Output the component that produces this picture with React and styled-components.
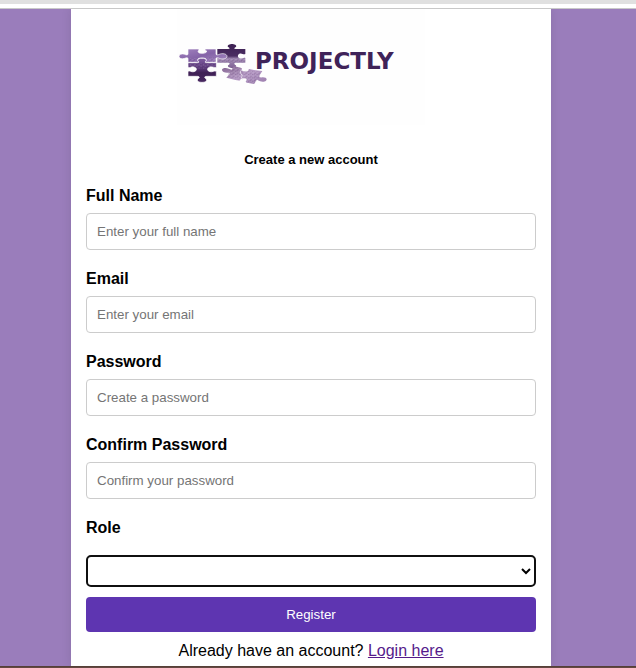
import React from "react";
import styled, { createGlobalStyle } from "styled-components";

const GlobalStyle = createGlobalStyle`
  *, *::before, *::after { box-sizing: border-box; }
  body {
    margin: 0;
    background: #9a7dbb;
    color: #000;
    font: 16px/18px "Liberation Sans", Arial, sans-serif;
  }
`;

const Page = styled.div`
  min-height: 100vh;
  display: flex;
  flex-direction: column;
`;

const TopStrip = styled.div`
  height: 9px;
  background: #fff;
  border-top: 4px solid #e0e0e0;
  border-bottom: 1px solid #c8c8c8;
`;

const Main = styled.main`
  flex: 1;
  display: flex;
  justify-content: center;
  padding-right: 14px;
  overflow: hidden;
`;

const Panel = styled.form`
  width: 100%;
  max-width: 480px;
  padding: 0 15px 6px;
  display: flex;
  flex-direction: column;
  background: #fff;
  box-shadow: 0 0 10px rgba(0, 0, 0, 0.1);
`;

const Logo = styled.svg`
  display: block;
  align-self: center;
  width: 248px;
  height: 116px;
  margin-right: 20px;
  background: #fefefe;
`;

const Wordmark = styled.text`
  font: bold 23px "DejaVu Sans", Verdana, sans-serif;
  fill: #3f2359;
`;

const Title = styled.h1`
  margin: 27px 0 19px;
  font-size: 13px;
  line-height: 16px;
  text-align: center;
`;

const Field = styled.div`
  display: flex;
  flex-direction: column;
  gap: ${({ $gap }) => $gap || 8}px;
  margin-bottom: ${({ $after }) => $after || 20}px;
`;

const Label = styled.label`
  font-weight: bold;
`;

const Input = styled.input`
  width: 100%;
  height: 37px;
  padding: 0 10px;
  border: 1px solid #ccc;
  border-radius: 4px;
  background: #fff;
  font-family: inherit;

  &::placeholder { color: #757575; }
`;

const Select = styled.select`
  width: 100%;
  height: 32px;
  border: 2px solid #101010;
  border-radius: 5px;
  background: #fff;
  color: #000;
  font-family: inherit;
`;

const Button = styled.button`
  height: 35px;
  border: 0;
  border-radius: 4px;
  background: #5e35b1;
  color: #fff;
  font-family: inherit;
  cursor: pointer;
`;

const Footer = styled.p`
  margin: 10px 0 0;
  text-align: center;
`;

const Link = styled.a`
  color: #551a8b;
`;

const BottomStrip = styled.div`
  height: 2px;
  background: #654842;
  border-top: 1px solid #554038;
`;

const fields = [
  { id: "name", label: "Full Name", type: "text", placeholder: "Enter your full name" },
  { id: "email", label: "Email", type: "email", placeholder: "Enter your email" },
  { id: "password", label: "Password", type: "password", placeholder: "Create a password" },
  { id: "confirm", label: "Confirm Password", type: "password", placeholder: "Confirm your password" },
];

function ProjectlyLogo() {
  return (
    <Logo viewBox="0 0 248 116" role="img" aria-label="Projectly">
      <defs>
        <linearGradient id="lilac" x1="0" y1="0" x2="1" y2="1">
          <stop offset="0" stopColor="#a283bf" />
          <stop offset=".5" stopColor="#8564a8" />
          <stop offset="1" stopColor="#a88bc4" />
        </linearGradient>
        <linearGradient id="plum" x1="0" y1="0" x2="0" y2="1">
          <stop offset="0" stopColor="#7f5ca0" />
          <stop offset=".4" stopColor="#5c3a7b" />
          <stop offset=".6" stopColor="#3f2055" />
          <stop offset="1" stopColor="#472760" />
        </linearGradient>
        <linearGradient id="dusk" x1="0" y1="0" x2="0" y2="1">
          <stop offset="0" stopColor="#3c2052" />
          <stop offset=".5" stopColor="#4b2d62" />
          <stop offset=".62" stopColor="#a48cb6" />
          <stop offset="1" stopColor="#7d6092" />
        </linearGradient>
        <linearGradient id="mist" x1="0" y1="0" x2="1" y2="1">
          <stop offset="0" stopColor="#82638f" />
          <stop offset=".5" stopColor="#b79bc6" />
          <stop offset="1" stopColor="#9a7cac" />
        </linearGradient>
        <pattern id="grain" width="13" height="10" patternUnits="userSpaceOnUse">
          <path d="M0 2h4M8 4h3M3 8h3" stroke="#3c2050" strokeOpacity=".4" strokeWidth="2" />
          <path d="M3 5h3M9 8h3" stroke="#fff" strokeOpacity=".35" strokeWidth="2" />
        </pattern>
      </defs>

      <g transform="translate(-1 31) scale(.3333)">
        <path
          fill="url(#dusk)"
          d="M124 27H154C164 27 162 24 156 21C152 15 162 12 168 12C174 12 184 15 180 21C174 24 172 27 182 27H208V42C202 45 198 38 190 41C184 45 184 51 190 55C198 58 202 51 208 54V68H182C172 68 174 72 180 76C182 82 174 84 168 84C162 84 154 82 156 76C162 72 164 68 154 68H124Z"
        />
        <path fill="url(#grain)" d="M124 54H208V68H124Z" />
        <path
          fill="url(#lilac)"
          stroke="#fff"
          strokeWidth="2"
          d="M36 27H62C72 27 70 30 66 33C66 39 72 40 78 40C84 40 92 39 92 33C86 30 84 27 94 27H120V42C120 46 126 45 130 43C138 39 153 41 153 49C153 57 138 59 130 55C126 53 120 52 120 56V67H94C84 67 88 63 91 60C91 55 84 54 78 54C72 54 65 55 65 60C68 63 72 67 62 67H36V56C36 52 30 53 26 55C18 58 9 56 9 49C9 42 18 40 26 43C30 45 36 46 36 42Z"
        />
        <path
          fill="url(#plum)"
          stroke="#fff"
          strokeWidth="2"
          d="M36 68H62C72 68 68 65 65 61C65 56 72 55 78 55C84 55 91 56 91 61C88 65 84 68 94 68H121V82C115 85 110 79 102 81C92 84 92 92 102 95C110 97 115 91 121 94V109H94C84 109 84 113 91 117C94 125 85 127 78 127C71 127 62 125 65 117C72 113 72 109 62 109H36V94C42 91 46 97 54 95C64 92 64 84 54 81C46 79 42 85 36 82Z"
        />
        <path fill="url(#grain)" d="M37 70H120V82L102 80L92 87H64L54 80L37 82Z" />
        <path fill="url(#grain)" d="M38 54H62L58 66H38ZM95 52H119V66H98Z" />
        <path
          fill="url(#mist)"
          d="M138 90C138 84 150 83 158 86L167 89L173 78L194 83C202 85 195 88 197 91C203 98 220 94 218 88C218 85 228 89 234 90L259 93L250 107C248 113 254 113 261 112C270 112 275 117 270 122C264 127 252 125 246 121C240 118 240 126 234 132L213 128C205 126 212 122 213 119C210 113 195 114 193 119C192 123 184 121 178 120L151 113L161 101C163 97 158 98 153 98C145 98 138 95 138 90Z"
        />
        <path
          fill="url(#grain)"
          d="M160 90L175 80L194 84L197 92L218 92L258 95L246 119L234 131L213 127L210 116L191 119L152 112Z"
        />
        <path fill="none" stroke="#fff" strokeWidth="2" d="M197 91Q188 94 195 101Q202 107 196 114" />
      </g>
      <Wordmark x="78" y="60">PROJECTLY</Wordmark>
    </Logo>
  );
}

export default function App() {
  return (
    <Page>
      <GlobalStyle />
      <TopStrip />
      <Main>
        <Panel onSubmit={(event) => event.preventDefault()}>
          <ProjectlyLogo />
          <Title>Create a new account</Title>
          {fields.map(({ id, label, type, placeholder }) => (
            <Field key={id}>
              <Label htmlFor={id}>{label}</Label>
              <Input id={id} type={type} placeholder={placeholder} />
            </Field>
          ))}
          <Field $gap={18} $after={10}>
            <Label htmlFor="role">Role</Label>
            <Select id="role" defaultValue="">
              <option value="" />
            </Select>
          </Field>
          <Button type="submit">Register</Button>
          <Footer>
            Already have an account? <Link href="#login">Login here</Link>
          </Footer>
        </Panel>
      </Main>
      <BottomStrip />
    </Page>
  );
}
